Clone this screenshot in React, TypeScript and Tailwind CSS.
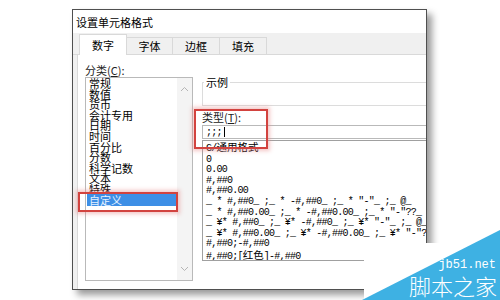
const categories = ['常规', '数值', '货币', '会计专用', '日期', '时间', '百分比', '分数', '科学记数', '文本', '特殊', '自定义'];

const tabs = ['数字', '字体', '边框', '填充'];
const tabWidths = ['w-[48px]', 'w-[46px]', 'w-[47px]', 'w-[47px]'];

const cjk = "font-['Noto_Sans_CJK_SC',sans-serif] text-[10.5px] tracking-normal";

const formats: React.ReactNode[] = [
  <>G/<span className={cjk}>通用格式</span></>,
  '0',
  '0.00',
  '#,##0',
  '#,##0.00',
  '_ * #,##0_ ;_ * -#,##0_ ;_ * "-"_ ;_ @_ ',
  '_ * #,##0.00_ ;_ * -#,##0.00_ ;_ * "-"??_ ;_ @_ ',
  '_ ¥* #,##0_ ;_ ¥* -#,##0_ ;_ ¥* "-"_ ;_ @_ ',
  '_ ¥* #,##0.00_ ;_ ¥* -#,##0.00_ ;_ ¥* "-"??_ ;_ @_ ',
  '#,##0;-#,##0',
  <>#,##0;[<span className={cjk}>红色</span>]-#,##0</>,
];

function Chevron({ up }: { up?: boolean }) {
  return (
    <svg width="9" height="6" viewBox="0 0 9 6" fill="none" stroke="#b5b5b5" strokeWidth="1">
      <polyline points={up ? '1,5 4.5,1.5 8,5' : '1,1 4.5,4.5 8,1'} />
    </svg>
  );
}

export default function App() {
  return (
    <div className="relative w-[500px] h-[300px] overflow-hidden bg-white pl-[72px] pt-[9px] font-['Noto_Sans_CJK_SC',sans-serif] text-black">
      {/* Dialog window */}
      <div className="w-[355px] h-[281px] border border-[#4f4f4f] bg-[#f0f0f0] flex flex-col shadow-[5px_5px_7px_rgba(0,0,0,0.4)]">
        {/* Title */}
        <div className="h-[23px] bg-white pl-[3px] pt-[5px] text-[11px] leading-[14px]">设置单元格格式</div>

        {/* Tab strip */}
        <div className="h-[22px] flex items-end pl-[6px] border-b border-[#d9d9d9]">
          {tabs.map((t, i) => (
            <div
              key={t}
              className={`${tabWidths[i]} flex items-center justify-center text-[11px] border-t border-r border-[#d9d9d9] ${
                i === 0 ? 'h-[21px] -mb-px bg-white border-l' : 'h-[17px] bg-[#f0f0f0]'
              }`}
            >
              {t}
            </div>
          ))}
        </div>

        {/* Tab page */}
        <div className="flex-1 flex min-h-0">
          <div className="w-[4px]" />
          <div className="flex-1 bg-white border-l border-[#d9d9d9] flex pl-[7px] pt-[8px] overflow-hidden">
            {/* Category column */}
            <div className="w-[108px] flex flex-col shrink-0">
              <div className="h-[14px] text-[11px] leading-[14px] text-[#222]">
                分类(<span className="underline">C</span>):
              </div>
              <div className="h-[204px] border border-[#b9b9b9] flex">
                <div className="flex-1 flex flex-col pl-px">
                  {categories.map((c) => (
                    <div
                      key={c}
                      className={`text-[11px] leading-[10.6px] pl-[2px] ${
                        c === '自定义' ? 'bg-[#3d8fe6] text-[#e6f2ff] py-px -my-px' : ''
                      }`}
                    >
                      {c}
                    </div>
                  ))}
                </div>
                <div className="w-[15px] bg-[#f4f4f4] flex flex-col items-center justify-between py-[8px]">
                  <Chevron up />
                  <Chevron />
                </div>
              </div>
            </div>

            {/* Right column */}
            <div className="ml-[9px] w-[240px] shrink-0 flex flex-col">
              <fieldset className="mt-[12px] h-[31px] border border-[#dcdcdc]">
                <legend className="ml-px px-[2px] text-[11px] leading-[14px]">示例</legend>
              </fieldset>
              <div className="mt-[4px] h-[14px] text-[11px] leading-[14px] text-[#222]">
                类型(<span className="underline">T</span>):
              </div>
              <div className="mt-px h-[14px] border border-[#b9b9b9] flex items-center pl-[3px] font-['Liberation_Mono',monospace] text-[10px] tracking-[-0.75px]">
                ;;;<span className="ml-[2px] w-px h-[10px] bg-black" />
              </div>
              <div className="mt-px h-[121px] border border-[#a0a0a0] pl-[3px] pt-px overflow-hidden font-['Liberation_Mono','Noto_Sans_CJK_SC',monospace] text-[10px] tracking-[-0.75px]">
                {formats.map((f, i) => (
                  <div key={i} className="leading-[10.6px] whitespace-pre">
                    {f}
                  </div>
                ))}
              </div>
            </div>
          </div>
        </div>
      </div>

      {/* Red highlight boxes */}
      <div className="absolute left-[78px] top-[192px] w-[100px] h-[20px] border-2 border-[#d2433f] shadow-[0_0_4px_2px_rgba(230,130,130,0.45)]" />
      <div className="absolute left-[194px] top-[109px] w-[74px] h-[40px] border-2 border-[#d2433f] shadow-[0_0_4px_2px_rgba(230,130,130,0.45)]" />

      {/* Watermark */}
      <div className="absolute left-[364px] top-[243px] w-[136px] h-[57px] bg-white" />
      <div className="absolute left-[362px] top-[230px] w-[138px] h-[70px] bg-[#3eb1e3] [clip-path:polygon(0_100%,100%_0,100%_100%)]" />
      <div className="absolute right-[4px] top-[258px] text-white font-['Liberation_Mono',monospace] text-[12px] leading-[14px]">
        jb51.net
      </div>
      <div className="absolute right-[3px] top-[272px] text-white text-[22px] leading-[26px] font-light">脚本之家</div>
    </div>
  );
}
